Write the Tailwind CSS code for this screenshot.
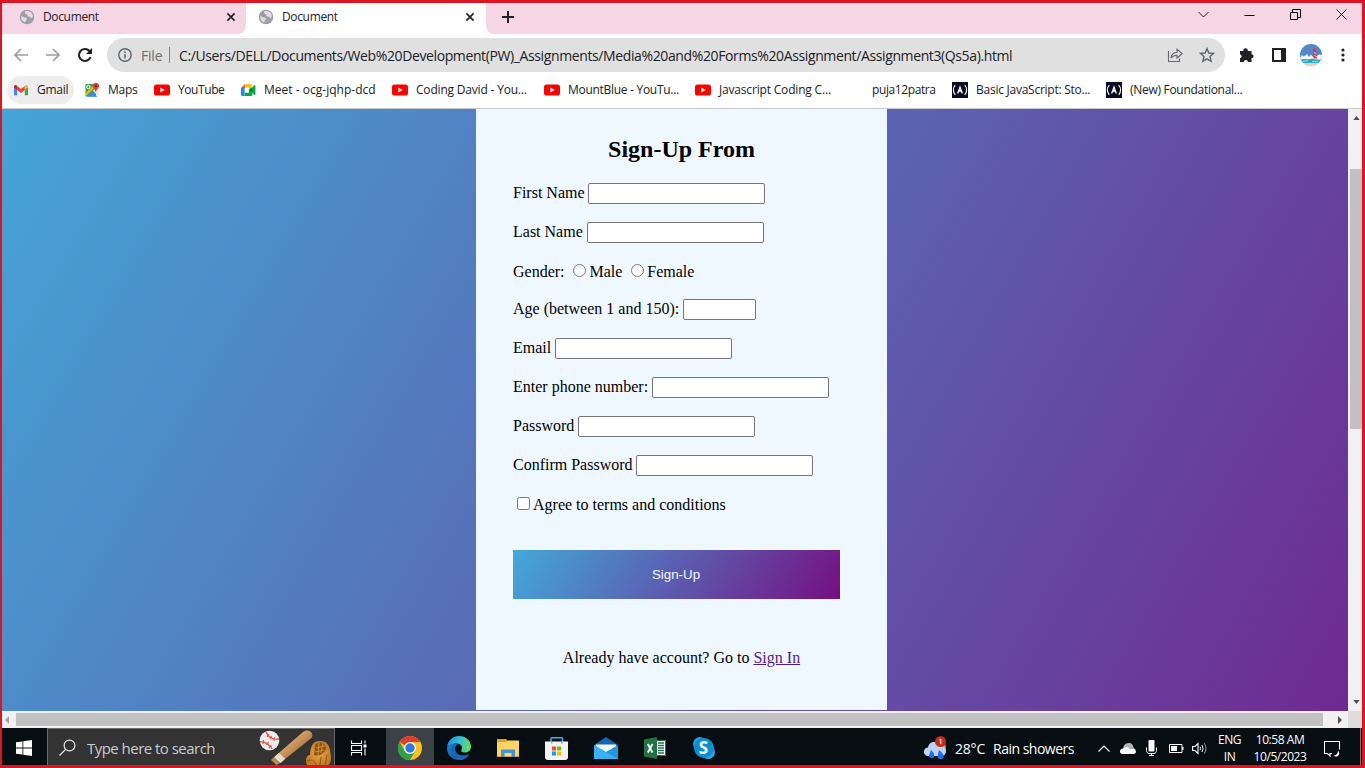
<!DOCTYPE html>
<html lang="en">
<head>
<meta charset="utf-8">
<title>Document</title>
<script src="https://cdn.jsdelivr.net/npm/@tailwindcss/browser@4"></script>
</head>
<body class="overflow-hidden">
<svg width="0" height="0" class="absolute">
  <defs>
    <symbol id="globe" viewBox="0 0 16 16"><circle cx="8" cy="8" r="7.3" fill="#9aa0a6"/><path d="M2.2 7.2 C4 7 4.6 8.6 6.3 8.6 C8 8.8 8.6 10 7.2 11.2 C6.6 12 6.6 13 5.6 13.3 C3.4 12.3 1.9 10 2.2 7.2Z M6 2.3 C8 1.6 11 2 12.6 4 C13.6 5.2 14 6.8 13.6 8.2 C12.6 9.6 11.4 9 11 7.8 C9.4 7.6 8 7.2 8.4 5.8 C7.4 5.4 5.6 4.6 6 2.3Z" fill="#e9dbe3"/></symbol>
    <symbol id="close" viewBox="0 0 10 10"><path d="M1.4 1.4 8.6 8.6M8.6 1.4 1.4 8.6" stroke="#202124" stroke-width="1.7"/></symbol>
    <symbol id="yt" viewBox="0 0 16 16"><rect y="2.5" width="16" height="11" rx="2.6" fill="#f00"/><path d="M6.4 5.6 10.6 8 6.4 10.4Z" fill="#fff"/></symbol>
    <symbol id="fcc" viewBox="0 0 16 16"><rect width="16" height="16" fill="#0a0a23"/><path d="M3.3 3.2C.8 5.8 .8 10.2 3.3 12.8M12.7 3.2C15.200 5.8 15.200 10.2 12.7 12.8" fill="none" stroke="#fff" stroke-width="1.1"/><path d="M5.6 11.5 8 5 10.4 11.5M6.500 10 8 8.300 9.500 10" fill="none" stroke="#fff" stroke-width="1.2"/></symbol>
  </defs>
</svg>
<div class="flex h-[768px] w-[1365px] flex-col overflow-hidden border-3 border-l-2 border-[#dd1422] bg-white font-['Open_Sans','Noto_Sans',sans-serif] text-[12px] text-[#202124]">

  <!-- Tab strip -->
  <header class="flex h-[31px] shrink-0 bg-[#f6d5e4]">
    <div class="flex w-[244px] items-center bg-white">
      <div class="flex h-full w-full items-center rounded-br-[8px] bg-[#f6d5e4] pb-[3px] pl-[17px] pr-[10px]">
        <svg class="size-4"><use href="#globe"/></svg>
        <span class="ml-2 grow whitespace-nowrap tracking-[-0.35px]">Document</span>
        <svg class="size-[10px]"><use href="#close"/></svg>
      </div>
    </div>
    <div class="flex w-[240px] items-center bg-white pb-[3px] pl-[12px] pr-[11px]">
      <svg class="size-4"><use href="#globe"/></svg>
      <span class="ml-2 grow whitespace-nowrap tracking-[-0.35px]">Document</span>
      <svg class="size-[10px]"><use href="#close"/></svg>
    </div>
    <div class="flex grow bg-white">
      <div class="flex h-full grow items-center rounded-bl-[8px] bg-[#f6d5e4] pb-[3px] pl-[16px]">
        <svg class="size-3" viewBox="0 0 12 12"><path d="M6 0V12M0 6H12" stroke="#202124" stroke-width="2"/></svg>
        <div class="ml-auto mr-[15px] flex items-center gap-[35px] pb-[6px]">
          <svg class="size-[11px]" viewBox="0 0 11 11"><path d="M.5 3 5.500 8 10.500 3" fill="none" stroke="#222" stroke-width="1"/></svg>
          <svg class="size-[11px]" viewBox="0 0 11 11"><path d="M.5 6.500H10.500" stroke="#000"/></svg>
          <svg class="size-[11px]" viewBox="0 0 11 11"><path d="M.5 3.500H7.500V10.500H.5ZM2.500 3.500V.5H10.500V8.500H7.500" fill="none" stroke="#000"/></svg>
          <svg class="size-[11px]" viewBox="0 0 11 11"><path d="M.5 .5 10.500 10.500M10.500 .5 .5 10.500" stroke="#000"/></svg>
        </div>
      </div>
    </div>
  </header>

  <!-- Toolbar -->
  <nav class="flex h-[42px] shrink-0 items-center pl-[12px] pr-[13px]">
    <svg class="size-[14px]" viewBox="0 0 14 14"><path d="M14 7H1.500M7 1 1 7 7 13" fill="none" stroke="#9c9c9e" stroke-width="1.700"/></svg>
    <svg class="ml-[18px] size-[14px]" viewBox="0 0 14 14"><path d="M0 7H12.500M7 1 13 7 7 13" fill="none" stroke="#9c9c9e" stroke-width="1.700"/></svg>
    <svg class="ml-[17px] size-4" viewBox="0 0 16 16"><path d="M13.600 10A6 6 0 1 1 12.300 3.800L14 5.500" fill="none" stroke="#1f2023" stroke-width="2.100"/><path d="M15 1V7H9Z" fill="#1f2023"/></svg>
    <div class="ml-[14px] flex h-[34px] w-[1118px] items-center rounded-full bg-[#e0e0e0] pl-[11px] pr-[10px] text-[14px]">
      <svg class="size-[14px]" viewBox="0 0 14 14"><circle cx="7" cy="7" r="6.200" fill="none" stroke="#5f6368" stroke-width="1.400"/><path d="M7 6V10.500M7 3.300V5" stroke="#5f6368" stroke-width="1.500"/></svg>
      <span class="ml-[9px] w-[28px] whitespace-nowrap tracking-[-0.2px] text-[#6b6e73]">File</span>
      <span class="h-[16px] w-px bg-[#858789]"></span>
      <span class="ml-[9px] grow whitespace-nowrap tracking-[-0.382px]">C:/Users/DELL/Documents/Web%20Development(PW)_Assignments/Media%20and%20Forms%20Assignment/Assignment3(Qs5a).html</span>
      <svg class="size-4" viewBox="0 0 16 16"><path d="M1.500 4V14.500H12.500V11.500" fill="none" stroke="#66686c" stroke-width="1.100"/><path d="M4 11C4.500 7.500 6.500 5.500 10 5.300V2.200L15.200 6.800 10 11V8.200C7.500 8.200 5.500 9 4 11Z" fill="none" stroke="#66686c" stroke-width="1.100"/></svg>
      <svg class="ml-4 size-4" viewBox="0 0 16 16"><path d="M8 1.600 9.800 6 14.600 6.400 11 9.600 12.100 14.300 8 11.800 3.900 14.300 5 9.600 1.400 6.400 6.200 6Z" fill="none" stroke="#5f6368" stroke-width="1.400"/></svg>
    </div>
    <svg class="ml-[14px] size-4" viewBox="0 0 16 16"><path d="M1 4H4.500A2.200 2.200 0 1 1 8.700 4H12.500V7.200A2 2 0 1 1 12.500 11.300V15H8.900A2.100 2.100 0 0 0 4.700 15H1V11.300A2.100 2.100 0 0 0 1 7.200Z" fill="#202124"/></svg>
    <svg class="ml-[17px] size-[14px]" viewBox="0 0 14 14"><path d="M1 1H13V13H1Z" fill="none" stroke="#202124" stroke-width="2"/><path d="M9 0H14V14H9Z" fill="#202124"/></svg>
    <svg class="ml-[14px] size-[22px]" viewBox="0 0 22 22"><defs><clipPath id="av"><circle cx="11" cy="11" r="11"/></clipPath></defs><g clip-path="url(#av)"><path fill="#5087d2" d="M0 0H22V22H0z"/><path d="M0 14L2 11 4 12.500 7 10 9 13 11 10.500 13 13 17 12 19 10.500 22 11V22H0z" fill="#f1f7fb"/><path d="M0 16C4 14 6 16 10 15C14 14 18 17 22 15V19H0z" fill="#2ba9bd"/><path d="M3 17H8M12 17.500H18" stroke="#bfe7ec" stroke-width=".8"/><path d="M0 19H22V22H0z" fill="#f8c9a4"/><path d="M13 5.500 14.500 3.500 16 5.500V8L17 14.500H13.500Z" fill="#e03a45"/><path d="M14 8.500 16 9.500M14.500 11.500 16.500 12.500" stroke="#fff" stroke-width=".7"/><circle cx="8.800" cy="4.800" r="1" fill="#8a7a5c"/></g></svg>
    <svg class="ml-[19px] h-[14px] w-[4px]" viewBox="0 0 4 14"><g fill="#202124"><circle cx="2" cy="2" r="1.600"/><circle cx="2" cy="7" r="1.600"/><circle cx="2" cy="12" r="1.600"/></g></svg>
  </nav>

  <!-- Bookmarks -->
  <div class="flex h-[33px] shrink-0 items-center border-b border-[#c9c9cb] pb-[4px] pl-[5px] tracking-[-0.25px] whitespace-nowrap">
    <div class="flex h-[28px] w-[67px] items-center rounded-full bg-[#ededed] pl-[6px]">
      <svg class="size-4" viewBox="0 0 16 16"><path d="M1 4.500V13.300H4.200V7Z" fill="#4285f4"/><path d="M15 4.500V13.300H11.800V7Z" fill="#34a853"/><path d="M4.200 4V8L8 11 11.800 8V4L8 6.900Z" fill="#ea4335"/><path d="M1 4.500C1 2.800 2.800 2.400 4.200 3.800V8L1 5.600Z" fill="#c5221f"/><path d="M15 4.500C15 2.800 13.200 2.400 11.800 3.800V8L15 5.600Z" fill="#fbbc04"/></svg>
      <span class="ml-2">Gmail</span>
    </div>
    <div class="ml-[10px] flex w-[70px] items-center gap-2">
      <svg class="size-4" viewBox="0 0 16 16"><path fill="#34a853" d="M1.500 2H12V14.500H1.500Z"/><path fill="#4285f4" d="M3 14.800 8 9.500 13.500 14.800Z"/><path fill="#fbbc04" d="M1.500 11.500 9.500 3.500 11 5 1.500 14.500Z"/><path fill="#dfe7f2" d="M8.800 8.600 14.500 14.500V9L12 6Z"/><circle cx="4.400" cy="5" r="1.700" fill="none" stroke="#fff"/><path fill="#ea4335" d="M11.800.8C9.800.8 8.500 2.200 8.500 4C8.500 6.200 11 7.200 11.800 10C12.600 7.200 15.200 6.200 15.200 4C15.200 2.200 13.800.8 11.800.8Z"/><circle cx="11.800" cy="4" r="1.200" fill="#8c1d18"/></svg>
      <span>Maps</span>
    </div>
    <div class="flex w-[86px] items-center gap-2"><svg class="size-4"><use href="#yt"/></svg><span class="tracking-[-0.42px]">YouTube</span></div>
    <div class="flex w-[152px] items-center gap-2">
      <svg class="size-4" viewBox="0 0 16 16"><path fill="#ea4335" d="M1 6.200 5 2V6.200Z"/><path fill="#fbbc04" d="M4.600 2.200H11.500V7L9 8V5.500H4.600Z"/><path fill="#2684fc" d="M1 5.800H4.600V10.800H4.600V14H2.200C1.500 14 1 13.500 1 12.800Z"/><path fill="#00ac47" d="M4.600 10.800H9V8L14.500 3.200C15 2.900 15.400 3.100 15.400 3.600V12.500C15.400 13 15 13.200 14.500 12.900L12 10.900V13C12 13.600 11.600 14 11 14H4.600Z"/><path fill="#00832d" d="M9 8 12 5.500V10.800Z"/></svg>
      <span class="tracking-[0.02px]">Meet - ocg-jqhp-dcd</span>
    </div>
    <div class="flex w-[152px] items-center gap-2"><svg class="size-4"><use href="#yt"/></svg><span class="tracking-[-0.19px]">Coding David - You...</span></div>
    <div class="flex w-[151px] items-center gap-2"><svg class="size-4"><use href="#yt"/></svg><span class="tracking-[-0.29px]">MountBlue - YouTu...</span></div>
    <div class="flex w-[153px] items-center gap-2"><svg class="size-4"><use href="#yt"/></svg><span class="tracking-[-0.18px]">Javascript Coding C...</span></div>
    <div class="flex w-[104px] items-center pl-6"><span class="tracking-[-0.4px]">puja12patra</span></div>
    <div class="flex w-[154px] items-center gap-2"><svg class="size-4"><use href="#fcc"/></svg><span>Basic JavaScript: Sto...</span></div>
    <div class="flex items-center gap-2"><svg class="size-4"><use href="#fcc"/></svg><span class="tracking-[-0.29px]">(New) Foundational...</span></div>
  </div>

  <!-- Page -->
  <div class="flex h-[602px] shrink-0">
    <main class="flex w-[1346px] bg-[linear-gradient(120deg,#45a5d8,#6f2a92)] pl-[474px] font-['Liberation_Serif',serif] text-[16px] text-black">
      <section class="flex h-[601px] w-[411px] flex-col bg-[#f0f8ff] pl-[37px] pt-[26px] whitespace-nowrap">
        <h2 class="mr-[37px] text-center text-[24px] leading-[28px] font-bold">Sign-Up From</h2>
        <div class="mt-[20px] flex flex-col gap-[18px] leading-[19px]">
          <label class="flex h-[21px] gap-[3.4px]">First Name <input type="text" class="w-[177px] rounded-[2px] border border-[#767676] bg-white"></label>
          <label class="flex h-[21px] gap-1">Last Name <input type="text" class="w-[177px] rounded-[2px] border border-[#767676] bg-white"></label>
          <div class="flex h-[20px] leading-[22px]">Gender:
            <input type="radio" class="mt-[3px] ml-[8.4px] mr-[3.500px] size-[13px]">Male
            <input type="radio" class="mt-[3px] ml-[9px] mr-[3px] size-[13px]">Female
          </div>
          <label class="flex h-[21px] gap-1">Age (between 1 and 150): <input type="text" class="w-[73px] rounded-[2px] border border-[#767676] bg-white"></label>
          <label class="flex h-[21px] gap-1">Email <input type="text" class="w-[177px] rounded-[2px] border border-[#767676] bg-white"></label>
          <label class="flex h-[21px] gap-1">Enter phone number: <input type="text" class="w-[177px] rounded-[2px] border border-[#767676] bg-white"></label>
          <label class="flex h-[21px] gap-1">Password <input type="password" class="w-[177px] rounded-[2px] border border-[#767676] bg-white"></label>
          <label class="flex h-[21px] gap-[3.4px]">Confirm Password <input type="password" class="w-[177px] rounded-[2px] border border-[#767676] bg-white"></label>
          <label class="flex h-[21px] leading-[22px]"><input type="checkbox" class="mt-[3px] ml-1 mr-[3px] size-[13px]">Agree to terms and conditions</label>
        </div>
        <button class="mt-[35px] h-[49px] w-[327px] bg-[linear-gradient(120deg,#43a9da,#750f84)] pr-px font-['Liberation_Sans',sans-serif] text-[13.333px] text-[#f0f8ff]">Sign-Up</button>
        <p class="mt-[49px] mr-[37px] text-center leading-[20px]">Already have account? Go to <a class="text-[#551a8b] underline">Sign In</a></p>
      </section>
    </main>
    <div class="flex w-[14px] flex-col items-center bg-[#f1f1f1] pl-[2px]">
      <svg class="mt-[7px] h-[4px] w-[7px]" viewBox="0 0 8 5"><path d="M4 0 8 5H0Z" fill="#505050"/></svg>
      <div class="mt-[49px] h-[260px] w-[12px] bg-[#c1c1c1]"></div>
      <svg class="mt-auto mb-[7px] h-[4px] w-[7px]" viewBox="0 0 8 5"><path d="M4 5 8 0H0Z" fill="#505050"/></svg>
    </div>
  </div>
  <div class="flex h-[17px] shrink-0 items-center bg-[#f1f1f1]">
    <svg class="ml-[3px] h-[8px] w-[4px]" viewBox="0 0 4 8"><path d="M4 0V8L0 4Z" fill="#a3a3a3"/></svg>
    <div class="ml-[7px] h-[13px] w-[1307px] bg-[#c1c1c1]"></div>
    <svg class="ml-[15px] h-[8px] w-[4px]" viewBox="0 0 4 8"><path d="M0 0V8L4 4Z" fill="#505050"/></svg>
    <div class="ml-auto h-full w-[14px] bg-[#dcdcdc]"></div>
  </div>

  <!-- Taskbar -->
  <footer class="flex h-[37px] shrink-0 items-center bg-[#060e12] text-[14px] text-white whitespace-nowrap">
    <div class="flex w-[45px] justify-center pt-[3px]">
      <svg class="ml-[-2px] size-4" viewBox="0 0 16 16"><path d="M0 2.300 6.500 1.400V7.600H0ZM7.300 1.300 16 0V7.600H7.300ZM0 8.400H6.500V14.600L0 13.700ZM7.300 8.400H16V16L7.300 14.700Z" fill="#fff"/></svg>
    </div>
    <div class="flex h-full w-[288px] items-center border-x border-t border-[#68696a] bg-[#333]">
      <svg class="ml-[11px] mt-[1px] size-[17px]" viewBox="0 0 17 17"><circle cx="10.500" cy="6.500" r="5.400" fill="none" stroke="#e8e8e8" stroke-width="1.200"/><path d="M6.600 10.400.5 16.500" stroke="#e8e8e8" stroke-width="1.300"/></svg>
      <span class="ml-[11px] mt-[2px] grow text-[15px] tracking-[-0.53px] text-[#c9ccce]">Type here to search</span>
      <svg class="mr-[2px] h-[36px] w-[73px]" viewBox="0 0 73 36">
        <defs>
          <linearGradient id="bat" x1="0" y1="0" x2="1" y2="1"><stop offset=".3" stop-color="#e5b272"/><stop offset=".7" stop-color="#a9713c"/></linearGradient>
          <radialGradient id="glv"><stop offset="0" stop-color="#f0a944"/><stop offset="1" stop-color="#c07a25"/></radialGradient>
        </defs>
        <circle cx="10.500" cy="11.500" r="9.800" fill="#ecebf2"/>
        <path d="M7 3C9 8 14 11 20 10M1 13C6 12 11 16 13 20" fill="none" stroke="#e4573a" stroke-width="1.300"/>
        <path d="M8 8 10 5M11 10 12.500 7M15 12 15.500 8.500M4 15 4.500 11M7.500 16 9.500 13M10 19 12.500 16.500" stroke="#e4573a" stroke-width="1.200"/>
        <path d="M14 29 44 3C48-1 56 3 52.500 9L21 34Z" fill="url(#bat)"/>
        <path d="M14 29 21 34 17.500 36 12 31Z" fill="#c58d4c"/>
        <path d="M15.500 28 20 24 26 30 21.500 34Z" fill="#eeeae2"/><path d="M17 26.500 23 32.500M18.800 25 24.600 31" stroke="#b9b1a5" stroke-width=".7"/>
        <path d="M48 36C46 32 47 26 51 26C51 18 54 12 60 12C68 11 71 17 71.500 24C73 30 71 36 69 36Z" fill="url(#glv)"/>
        <path d="M56 16C60 12 66 13 67 19C66 24 60 28 55 26Z" fill="#8b5216"/><path d="M57 19 66 17M56 23 65 21M60 14 59 26M64 14 62 24" stroke="#d98f35" stroke-width="1"/><path d="M48 32C53 30 55 31 57 36M62 28 61 36M68 26 66 36" fill="none" stroke="#93591d" stroke-width="1"/>
      </svg>
    </div>
    <div class="flex w-[51px] justify-center pt-[2px]">
      <svg class="mr-[4px] h-[16px] w-[17px]" viewBox="0 0 17 16"><path d="M1.500.5V3.500H11.500V.5M1.500 15.500V12.500H11.500V15.500M1.500 5.500H11.500V10.500H1.500ZM15 .5V3.500M15 8.500V15.500" fill="none" stroke="#fff" stroke-width="1.100"/><path fill="#fff" d="M13.500 4.500h3v3h-3z"/></svg>
    </div>
    <div class="flex h-full w-[48px] items-center justify-center bg-[#3b4247] pt-[3px]">
      <svg class="size-6" viewBox="0 0 24 24"><circle cx="12" cy="12" r="12" fill="#fbc116"/><path d="M12 12 1.600 6A12 12 0 0 1 22.400 6H12Z" fill="#e33b2e"/><path d="M1.600 6A12 12 0 0 0 12 24L17.200 15 12 12 6.800 15Z" fill="#2da14c"/><circle cx="12" cy="12" r="6" fill="#fff"/><circle cx="12" cy="12" r="4.700" fill="#2d78e8"/></svg>
    </div>
    <div class="flex w-[49px] justify-center pt-[3px]">
      <svg class="size-6" viewBox="0 0 24 24"><defs><linearGradient id="e1" x1="0" y1=".3" x2="1" y2=".4"><stop offset="0" stop-color="#1f8fdc"/><stop offset=".5" stop-color="#30bfd8"/><stop offset="1" stop-color="#62dd58"/></linearGradient><linearGradient id="e2" x1="0" y1="0" x2="1" y2="1"><stop offset="0" stop-color="#1b82d4"/><stop offset="1" stop-color="#114f9c"/></linearGradient></defs><path d="M0 11C1 4 6 0 12 0C19 0 24 5 24 10.500C24 14.500 21 16.500 17.500 16.500C14.500 16.500 13.600 15.400 14.500 14C16.500 11 14 7.500 9.500 7.500C5 7.500 1 10 0 11Z" fill="url(#e1)"/><path d="M0 12C.5 9 5 7.500 9 7.500C7 9 7 13 8.500 16C11 20 17 20.500 22 18C20 22 16 24 12 24C5 24-.2 18.500 0 12Z" fill="url(#e2)"/><path d="M9 7.600C5.500 8 3.500 12 5 16.500C6.500 20.500 9 23.500 13 24C18 23.500 20.500 21.500 22.300 18C17 20.500 11 20 9 16C7.800 13 8 10 11 8Z" fill="#1666b5"/></svg>
    </div>
    <div class="flex w-[49px] justify-center pt-[3px]">
      <svg class="h-[18px] w-[22px]" viewBox="0 0 22 18"><path d="M0 0H9L11 2H22V18H0Z" fill="#e6a117"/><path d="M0 3H9L11 1.500H22V17H0Z" fill="#fbd667"/><path d="M4 18V11.500C4 10.800 4.400 10.400 5 10.400H17C17.600 10.400 18 10.800 18 11.500V18H14.500V14H7.500V18Z" fill="#4294d8"/></svg>
    </div>
    <div class="flex w-[49px] justify-center pt-[3px]">
      <svg class="h-[23px] w-[23px]" viewBox="0 0 23 23"><path d="M6 6V1.800C6 1.200 6.400.8 7 .8H16.500C17.100.8 17.500 1.200 17.500 1.800V6" fill="none" stroke="#38b6ef" stroke-width="1.500"/><path d="M0 4.500H23V20C23 22 22 23 20 23H3C1 23 0 22 0 20Z" fill="#f3f3f3"/><path d="M6 4.500h1.500v2H6zM16 4.500h1.500v2H16z" fill="#38b6ef"/><path fill="#f25022" d="M7 9.500h4v4H7z"/><path fill="#7fba00" d="M12 9.500h4.200v4H12z"/><path fill="#00a4ef" d="M7 14.500h4v4H7z"/><path fill="#ffb900" d="M12 14.500h4.200v4H12z"/></svg>
    </div>
    <div class="flex w-[49px] justify-center pt-[3px]">
      <svg class="h-[22px] w-[24px]" viewBox="0 0 24 22"><path d="M0 8 12 0 24 8V12H0Z" fill="#1265b4"/><path d="M2 7.500H22V13L12 18 2 13Z" fill="#f6f7f8"/><path d="M0 8 12 15 0 22Z" fill="#39b2ef"/><path d="M24 8 0 22H24Z" fill="#2297e6"/><path d="M0 8 24 22H0Z" fill="#37b3f3"/></svg>
    </div>
    <div class="flex w-[49px] justify-center pt-[3px]">
      <svg class="h-[22px] w-[22px]" viewBox="0 0 22 22"><path d="M12 3H22V19H12Z" fill="#fff"/><path d="M12 3.500H21.500V18.500H12" fill="none" stroke="#217346"/><path d="M14 6H20M14 8.500H20M14 11H20M14 13.500H20M14 16H20" stroke="#217346" stroke-width="1.300"/><path d="M0 2.500 13 0V22L0 19.500Z" fill="#217346"/><path d="M3.800 7 8.500 15.500M8.500 7 3.800 15.500" stroke="#fff" stroke-width="1.800"/></svg>
    </div>
    <div class="flex w-[49px] justify-center pt-[3px]">
      <div class="relative size-[22px]">
        <svg class="size-[22px]" viewBox="0 0 22 22"><circle cx="7" cy="7" r="7" fill="#1b9fe6"/><circle cx="15" cy="15" r="7" fill="#27aeec"/><circle cx="11" cy="11" r="10" fill="#0a8fd2"/></svg>
        <span class="absolute inset-0 text-center text-[17px] leading-[22px] font-bold">S</span>
      </div>
    </div>
    <div class="ml-auto flex h-full items-center">
      <svg class="mt-[2px] h-[24px] w-[23px]" viewBox="0 0 23 24"><circle cx="17" cy="11" r="5" fill="#e8862c"/><path d="M5 20C1 20 0 18 0 15.500C0 13 2 11.500 4 11.500C4.500 8 7 6 10 6C13.500 6 15.500 8 16 10C20 9.500 22 12 22 15C22 18 20 20 17 20Z" fill="#bcd3f7"/><path d="M7 14C9 16 11 18 10 21C9 23 5 22.500 5 19.500ZM15 14C18 16 20 19 19.500 21.500C19 24 14 24 13.500 20.500Z" fill="#1674ea"/><circle cx="16.500" cy="5.500" r="5.500" fill="#c42b1c"/><path d="M15.300 4.200 16.800 3V8.200" fill="none" stroke="#fff"/></svg>
      <span class="ml-[8px] mt-[4px] w-[38px] tracking-[-0.2px]">28°C</span>
      <span class="mt-[4px] w-[105px] tracking-[-0.5px]">Rain showers</span>
      <svg class="mt-[3px] h-[7px] w-[12px]" viewBox="0 0 12 7"><path d="M.5 6.500 6 1 11.500 6.500" fill="none" stroke="#fff" stroke-width="1.200"/></svg>
      <svg class="ml-[10px] mt-[3px] h-[11px] w-[16px]" viewBox="0 0 16 11"><path d="M3 7C3 3 5 0 8.500 0C12 0 13 2 13.500 4.500L16 7Z" fill="#b2b2b2"/><path d="M2.500 11C1 11 0 10 0 8.500C0 6 2 5 4 5.500C6 3 9 4 10 6.500C14 5 16 7 16 8.800C16 10 15 11 13.500 11Z" fill="#fff"/></svg>
      <svg class="ml-[10px] mt-[3px] h-[16px] w-[11px]" viewBox="0 0 11 16"><rect x="2.500" width="6" height="11.500" rx="1" fill="#fff"/><path d="M.5 7.500V10.500C.5 12 1.500 13.500 3 13.500H8C9.500 13.500 10.500 12 10.500 10.500V7.500M5.500 13.500V15.500M3 15.500H8" fill="none" stroke="#fff"/></svg>
      <svg class="ml-[12px] mt-[4px] h-[9px] w-[15px]" viewBox="0 0 15 9"><path d="M.5.5H13V8.500H.5Z" fill="none" stroke="#fff"/><path d="M2 2H8V7H2ZM13 3h1.500v3H13z" fill="#fff"/></svg>
      <svg class="ml-[8px] mt-[3px] h-[13px] w-[16px]" viewBox="0 0 16 13"><path d="M.6 4.500H3L6 1.500V11.500L3 8.500H.6Z" fill="none" stroke="#fff" stroke-width="1.100"/><path d="M8 4.700Q9.200 6.500 8 8.300M10 3Q12.300 6.500 10 10" fill="none" stroke="#fff"/><path d="M12.300 1.300Q15.800 6.500 12.300 11.700" fill="none" stroke="#9a9a9a"/></svg>
      <div class="ml-[9px] mt-[2px] w-[25px] text-center text-[12px] leading-[17px] tracking-[-0.4px]"><div>ENG</div><div>IN</div></div>
      <div class="ml-[10px] mt-[2px] w-[56px] text-center text-[12px] leading-[17px] tracking-[-0.45px]"><div>10:58 AM</div><div>10/5/2023</div></div>
      <svg class="ml-[16px] mt-[4px] size-4" viewBox="0 0 16 16"><path d="M8 12.500H6V15L3.500 12.500H.5V.5H15.500V8.500" fill="none" stroke="#fff" stroke-width="1.100"/><path d="M14 9.500C15.500 11.500 16 13 14 15C12.500 16 10.500 15.500 9.500 14.500C12 14.500 14 12.500 14 9.500Z" fill="#fff"/></svg>
      <div class="ml-[20px] h-full w-[2px] border-l border-[#75787a]"></div>
    </div>
  </footer>
</div>
</body>
</html>
